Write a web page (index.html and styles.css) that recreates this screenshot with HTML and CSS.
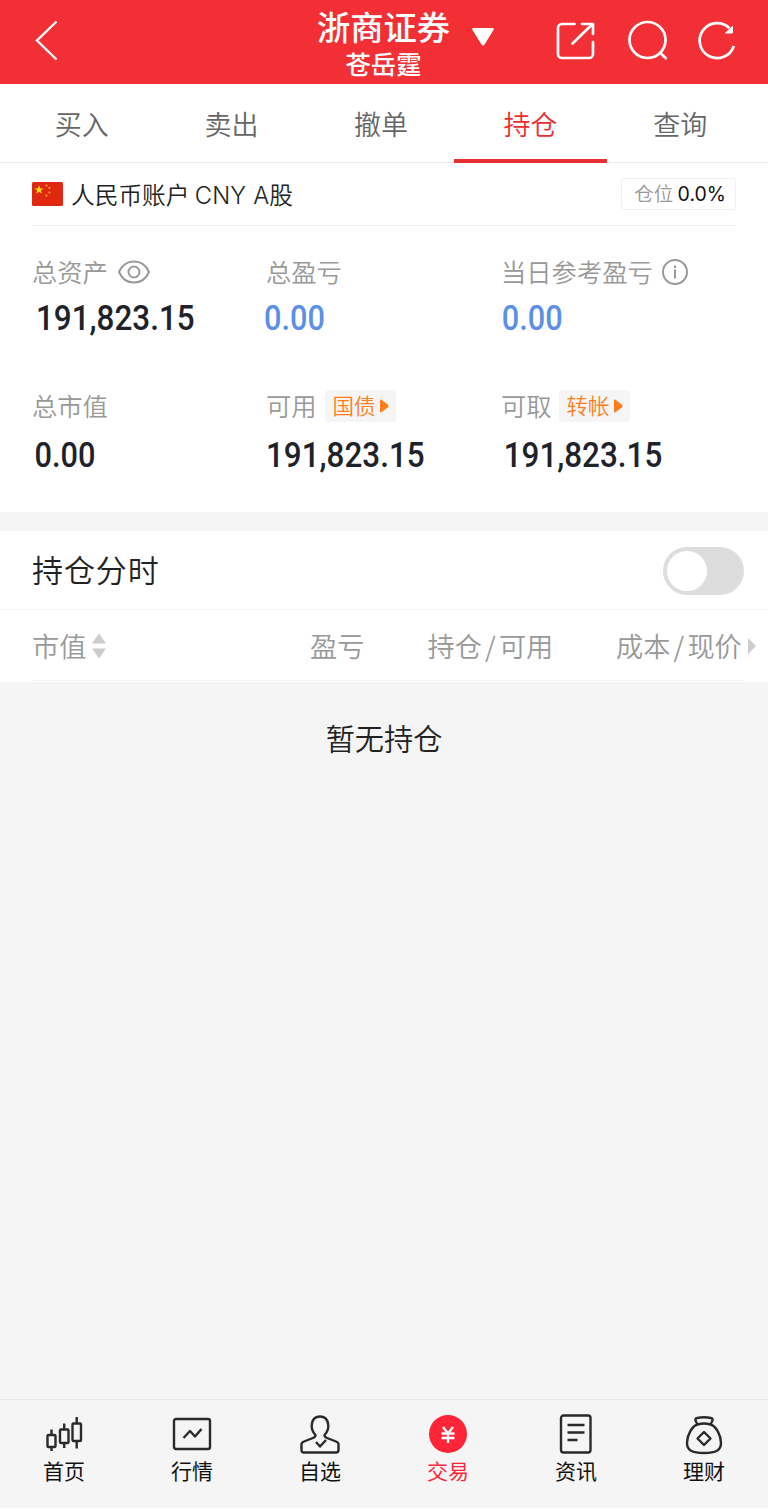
FILE: index.html
```html
<!DOCTYPE html>
<html lang="zh-CN">
<head>
<meta charset="utf-8">
<title>浙商证券</title>
<link rel="stylesheet" href="styles.css">
</head>
<body>
<div class="app">
  <header class="topbar">
    <svg class="back" width="24" height="42" viewBox="0 0 24 42"><path d="M22.500 2.500 3 21.500 22.500 40.500"/></svg>
    <div class="heading">
      <h1 class="title">浙商证券</h1>
      <p class="subtitle">苍岳霆</p>
    </div>
    <svg class="caret" width="24" height="20" viewBox="0 0 24 20"><path d="M2.500 1h19q2 0 1 2l-9 14.500q-1.500 2-3 0L1.500 3q-1-2 1-2z"/></svg>
    <svg class="tool share" width="40" height="40" viewBox="0 0 40 40"><path d="M19.500 4H7a4 4 0 0 0-4 4v26a4 4 0 0 0 4 4h27a4 4 0 0 0 4-4V22M17.500 23.500 37 4.500M27 4h11v10"/></svg>
    <svg class="tool search" width="42" height="42" viewBox="0 0 42 42"><circle cx="19.500" cy="19" r="18"/><path d="m32 31.500 6.500 6.500"/></svg>
    <svg class="tool refresh" width="40" height="40" viewBox="0 0 40 40"><path d="M36.800 25A17.500 17.500 0 1 1 32.500 7.200"/><path class="solid" d="M35.500 5.500V12H28.500z"/></svg>
  </header>

  <nav class="tabs">
    <a class="tab">买入</a>
    <a class="tab">卖出</a>
    <a class="tab">撤单</a>
    <a class="tab active">持仓</a>
    <a class="tab">查询</a>
  </nav>

  <section class="account">
    <div class="account-head">
      <svg class="flag" width="31" height="24" viewBox="0 0 31 24"><rect width="31" height="24" rx="1.500" fill="#de2910"/><path fill="#ffde00" d="m7 3.300 1.200 3.200h3.300L8.800 8.500l1 3.200L7 9.800l-2.800 1.900 1-3.200-2.700-2h3.300z"/><g fill="#f5a51d"><circle cx="14.500" cy="3.500" r="1.100"/><circle cx="17.400" cy="6" r="1.100"/><circle cx="17.400" cy="10.500" r="1.100"/><circle cx="14.500" cy="13.500" r="1.100"/></g></svg>
      <span class="account-name">人民币账户 <span class="latin">CNY A</span>股</span>
      <span class="position">仓位 <b class="percent">0.0%</b></span>
    </div>
    <div class="stats">
      <div class="stat">
        <div class="label"><span>总资产</span>
          <svg class="eye" width="34" height="26" viewBox="0 0 34 26"><path d="M2 13C8-1 26-1 32 13 26 27 8 27 2 13z"/><circle cx="17" cy="13" r="5.500"/></svg>
        </div>
        <div class="value shift-5">191,823.15</div>
      </div>
      <div class="stat">
        <div class="label">总盈亏</div>
        <div class="value short blue back-2">0.00</div>
      </div>
      <div class="stat">
        <div class="label">当日参考盈亏
          <svg class="info" width="28" height="28" viewBox="0 0 28 28"><circle cx="14" cy="14" r="12"/><path d="M14 11.500v9M14 7.500v2.500"/></svg>
        </div>
        <div class="value short blue shift-1">0.00</div>
      </div>
      <div class="stat">
        <div class="label">总市值</div>
        <div class="value short shift-2">0.00</div>
      </div>
      <div class="stat">
        <div class="label">可用<span class="badge"><span>国债</span><svg width="9" height="14" viewBox="0 0 9 14"><path d="M0 1.500Q0 0 1.500.8l6.500 5q1 1.200 0 2.400l-6.500 5Q0 14 0 12.500z"/></svg></span></div>
        <div class="value">191,823.15</div>
      </div>
      <div class="stat">
        <div class="label">可取<span class="badge transfer"><span>转帐</span><svg width="9" height="14" viewBox="0 0 9 14"><path d="M0 1.500Q0 0 1.500.8l6.500 5q1 1.200 0 2.400l-6.500 5Q0 14 0 12.500z"/></svg></span></div>
        <div class="value shift-3">191,823.15</div>
      </div>
    </div>
  </section>

  <section class="holdings">
    <div class="intraday">
      <span class="intraday-title">持仓分时</span>
      <span class="switch"><i class="knob"></i></span>
    </div>
    <div class="columns">
      <span class="col market">市值<svg width="14" height="26" viewBox="0 0 14 26"><path d="M7 .5 14 10.500H0zM7 25.500 14 15.500H0z"/></svg></span>
      <span class="col profit">盈亏</span>
      <span class="col amount">持仓<span class="slash">/</span>可用</span>
      <span class="col price">成本<span class="slash">/</span>现价<svg width="8" height="16" viewBox="0 0 8 16"><path d="M0 0 8 8 0 16z"/></svg></span>
    </div>
  </section>

  <main class="empty">暂无持仓</main>

  <nav class="bottom">
    <a class="item">
      <svg width="42" height="42" viewBox="0 0 42 42"><rect x="4.500" y="19" width="8" height="12" rx="1"/><rect x="17" y="13.500" width="8.500" height="13.500" rx="1"/><rect x="29.500" y="7.500" width="8.500" height="17.500" rx="1"/><path d="M8.500 13.500V19M8.500 31v4M21.200 7.500v6M21.200 27v5M33.700 1v6.500M33.700 25v7.500"/></svg>
      首页</a>
    <a class="item">
      <svg width="42" height="42" viewBox="0 0 42 42"><rect x="3" y="3" width="36" height="30" rx="2"/><path d="m12.500 22 6.500-7 5 5.500 6.500-7.500"/></svg>
      行情</a>
    <a class="item">
      <svg width="42" height="42" viewBox="0 0 42 42"><path d="M16.500 19C10.500 13 11.500.5 21 .5S31.500 13 25.500 19q0 2 2.500 3l9 3.500q2.500 1 2.500 3V34q0 2.500-2.500 2.500H5Q2.500 36.500 2.500 34v-5.500q0-2 2.500-3L14 22q2.500-1 2.500-3z"/><path d="m17 26 4 4.500 6-6.500"/></svg>
      自选</a>
    <a class="item current">
      <svg width="42" height="42" viewBox="0 0 42 42"><circle class="disc" cx="21" cy="18" r="19"/><path d="m16 11 5 6.500 5-6.500M21 17v10M14.500 17.500h13M14.500 22h13"/></svg>
      交易</a>
    <a class="item">
      <svg width="42" height="42" viewBox="0 0 42 42"><rect x="6" y="-.5" width="29.500" height="37" rx="2.500"/><path d="M12.500 9h17M12.500 16.500h17M12.500 24h10"/></svg>
      资讯</a>
    <a class="item">
      <svg width="42" height="42" viewBox="0 0 42 42"><path d="M14.500 8.500C13 6 11 2.500 14 2q7-1.500 14 0c3 .5 1 4-.5 6.500M14.500 8.500C9 10 4 19 4 27c0 7.500 5 10 17 10s17-2.500 17-10C38 19 33 10 27.500 8.500Q21 6.500 14.500 8.500zM21 16l6.500 6.500L21 29l-6.500-6.500z"/></svg>
      理财</a>
  </nav>
</div>
</body>
</html>
```
FILE: styles.css
```css
* { box-sizing: border-box; }
body {
  margin: 0;
  background: #fff;
  font-family: "Noto Sans CJK SC DemiLight", "Noto Sans CJK SC", sans-serif;
  font-weight: 350;
}
svg { fill: none; flex: none; overflow: visible; }

.app { display: flex; flex-direction: column; height: 1508px; background: #f5f5f5; }

.topbar { display: flex; height: 84px; background: #f12f35; color: #fff; }
.topbar svg { stroke: #fff; stroke-width: 2.400; }
.back { margin: 19px 0 0 34px; }
.heading { width: 134px; margin-left: 258.500px; text-align: center; }
.title { margin: 6px 0 0; font-family: "Noto Sans CJK SC", sans-serif; font-size: 33.300px; line-height: 40px; font-weight: 500; white-space: nowrap; }
.subtitle { margin: 3px 0 0; font-family: "Noto Sans CJK SC", sans-serif; font-size: 25.300px; line-height: 28px; font-weight: 500; }
.topbar .caret { margin: 27px 0 0 20.500px; fill: #fff; stroke: none; }
.share { margin: 20px 0 0 60px; }
.search { margin: 21px 0 0 33px; }
.refresh { margin: 21px 0 0 27px; }
.topbar .tool { stroke-linejoin: round; stroke-width: 2.700; }
.share { stroke-linecap: round; }
.refresh .solid { fill: #fff; stroke-width: 1; }

.tabs { display: flex; height: 79px; padding: 0 13px 0 7px; background: #fff; border-bottom: 1px solid #ededed; }
.tab { flex: 1; text-align: center; font-size: 27px; line-height: 79px; color: #666; }
.active { margin: 0 -2px -1px; flex-basis: 4px; color: #e93030; border-bottom: 4px solid #e93030; }

.account { height: 349px; padding: 0 32px; background: #fff; }
.account-head { display: flex; align-items: center; height: 63px; border-bottom: 1px solid #f0f0f0; }
.account-name { margin-left: 8px; font-size: 23.700px; color: #222; }
.latin { font-family: Inter, sans-serif; font-weight: 300; letter-spacing: .2px; }
.position { margin-left: auto; height: 32px; padding: 0 9px 0 12px; border: 1px solid #f0f0f0; border-radius: 3px; font-size: 19.500px; line-height: 28px; color: #999; }
.percent { font-family: Inter, sans-serif; font-size: 19.500px; font-weight: 400; color: #111; }
.stats { display: grid; grid-template-columns: 234px 235px 235px; grid-template-rows: 134px 134px; padding-top: 26px; }
.label { display: flex; align-items: center; height: 38px; font-size: 25.300px; color: #999; white-space: nowrap; }
.label svg { stroke: #999; stroke-width: 2; }
.label .eye { margin: 1px 0 0 9px; }
.label .info { margin: 2px 0 0 8px; }
.value { margin-top: 8px; font: 500 35.300px/40px Roboto, sans-serif; color: #20222a; transform: scaleX(.89); transform-origin: 0 0; }
.short { transform: scaleX(.87); }
.blue { color: #5b90e6; }
.stat:nth-child(n + 4) .value { margin-top: 11px; }
.shift-1 { padding-left: 1px; }
.shift-2 { padding-left: 3px; }
.shift-3 { padding-left: 3px; }
.shift-5 { padding-left: 4.500px; }
.back-2 { margin-left: -2.500px; }
.badge { display: flex; align-items: center; gap: 4px; height: 32px; margin: 2px 0 0 8px; padding: 0 7px 0 8px; border-radius: 4px; background: #f5f5f5; font-size: 21.500px; line-height: 30px; color: #ff7e1b; }
.transfer { margin-left: 7px; }
.badge span { padding-bottom: 2px; }
.label .badge svg { fill: #ff7e1b; stroke: none; }

.holdings { margin-top: 19px; padding-bottom: 1px; background: #fff; }
.intraday { display: flex; align-items: center; justify-content: space-between; height: 79px; padding: 0 24px 0 32px; border-bottom: 1px solid #f2f2f2; font-size: 31px; letter-spacing: .900px; color: #222; }
.intraday-title { padding-bottom: 3px; }
.switch { width: 81px; height: 48px; margin-top: 1px; padding: 4px; border-radius: 24px; background: #ddd; }
.knob { display: block; width: 40px; height: 40px; border-radius: 50%; background: #fff; }
.columns { display: flex; height: 71px; margin: 0 24px 0 32px; border-bottom: 1px solid #f5f5f5; font-size: 27.200px; line-height: 71px; color: #999; white-space: nowrap; }
.col { display: flex; flex: none; align-items: center; }
.col svg { margin-top: 1px; fill: #ccc; }
.market { width: 278px; }
.market svg { margin-left: 6px; }
.profit { width: 117.500px; }
.amount { width: 188.500px; }
.price svg { margin-left: 6px; }
.slash { width: 17px; text-align: center; }

.empty { flex: 1; padding-top: 33px; text-align: center; font-size: 29.200px; line-height: 44px; color: #222; }

.bottom { display: flex; height: 109px; border-top: 1px solid #e9e9e9; }
.item { display: flex; flex: 1; flex-direction: column; align-items: center; padding-top: 16px; font-family: "Noto Sans CJK SC", sans-serif; font-size: 21px; line-height: 24px; color: #111; font-weight: 400; }
.item svg { stroke: #2a2a2a; stroke-width: 2.400; stroke-linejoin: round; }
.current { color: #ff2538; }
.current svg { stroke: #fff; }
.disc { fill: #ff2538; stroke: none; }
```
